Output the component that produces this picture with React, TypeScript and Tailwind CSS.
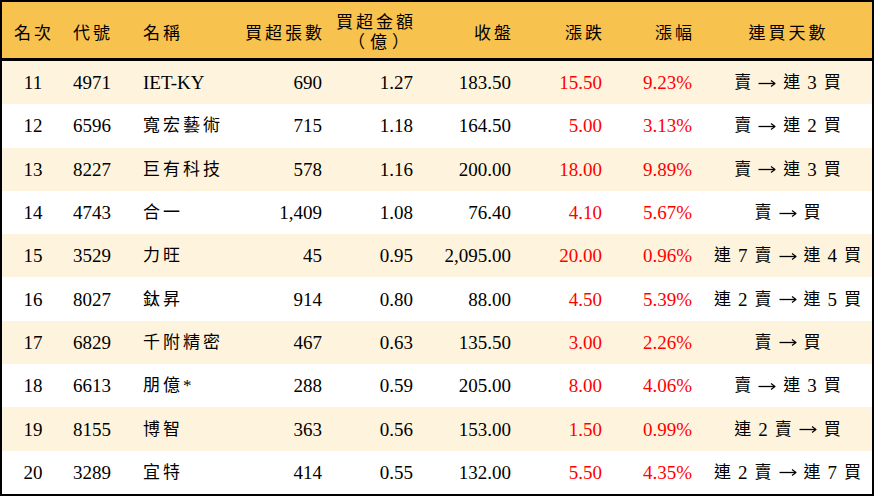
import React from "react";

type Row = {
  rank: string;
  code: string;
  name: string;
  vol: string;
  amt: string;
  close: string;
  chg: string;
  pct: string;
  streak: string[];
};

const rows: Row[] = [
  { rank: "11", code: "4971", name: "IET-KY", vol: "690", amt: "1.27", close: "183.50", chg: "15.50", pct: "9.23%", streak: ["賣", "→", "連", "3", "買"] },
  { rank: "12", code: "6596", name: "寬宏藝術", vol: "715", amt: "1.18", close: "164.50", chg: "5.00", pct: "3.13%", streak: ["賣", "→", "連", "2", "買"] },
  { rank: "13", code: "8227", name: "巨有科技", vol: "578", amt: "1.16", close: "200.00", chg: "18.00", pct: "9.89%", streak: ["賣", "→", "連", "3", "買"] },
  { rank: "14", code: "4743", name: "合一", vol: "1,409", amt: "1.08", close: "76.40", chg: "4.10", pct: "5.67%", streak: ["賣", "→", "買"] },
  { rank: "15", code: "3529", name: "力旺", vol: "45", amt: "0.95", close: "2,095.00", chg: "20.00", pct: "0.96%", streak: ["連", "7", "賣", "→", "連", "4", "買"] },
  { rank: "16", code: "8027", name: "鈦昇", vol: "914", amt: "0.80", close: "88.00", chg: "4.50", pct: "5.39%", streak: ["連", "2", "賣", "→", "連", "5", "買"] },
  { rank: "17", code: "6829", name: "千附精密", vol: "467", amt: "0.63", close: "135.50", chg: "3.00", pct: "2.26%", streak: ["賣", "→", "買"] },
  { rank: "18", code: "6613", name: "朋億*", vol: "288", amt: "0.59", close: "205.00", chg: "8.00", pct: "4.06%", streak: ["賣", "→", "連", "3", "買"] },
  { rank: "19", code: "8155", name: "博智", vol: "363", amt: "0.56", close: "153.00", chg: "1.50", pct: "0.99%", streak: ["連", "2", "賣", "→", "買"] },
  { rank: "20", code: "3289", name: "宜特", vol: "414", amt: "0.55", close: "132.00", chg: "5.50", pct: "4.35%", streak: ["連", "2", "賣", "→", "連", "7", "買"] },
];

const grid =
  "grid grid-cols-[62px_70px_96px_102px_91px_98px_91px_90px_170px] items-center";

const font = {
  fontFamily: '"Liberation Serif", "Noto Sans CJK TC", serif',
};

function Arrow() {
  return (
    <svg width="18" height="10" viewBox="0 0 18 10" className="block">
      <path d="M0.5 5.5 H16.5" stroke="#000" strokeWidth="1.3" fill="none" />
      <path d="M13 2.5 L17 5.5 L13 8.5" stroke="#000" strokeWidth="1.2" fill="none" strokeLinejoin="round" />
    </svg>
  );
}

export default function App() {
  return (
    <div
      className="w-[874px] h-[496px] border-2 border-black bg-white flex flex-col text-black overflow-hidden"
      style={font}
    >
      <div className={`${grid} h-[59px] pt-[7px] bg-[#F8C24F] border-b-[3px] border-black text-[17px] leading-[20px] tracking-[3px] shrink-0`}>
        <div className="text-center pl-[2px]">名次</div>
        <div className="pl-[9px]">代號</div>
        <div className="pl-[9px]">名稱</div>
        <div className="text-right pr-[7px]">買超張數</div>
        <div className="text-right pr-[7px] flex flex-col items-end -mt-[2px]">
          <span>買超金額</span>
          <span className="pr-[2px] tracking-[5px]">（億）</span>
        </div>
        <div className="text-right pr-[7px]">收盤</div>
        <div className="text-right pr-[7px]">漲跌</div>
        <div className="text-right pr-[7px]">漲幅</div>
        <div className="text-center pl-[3px]">連買天數</div>
      </div>
      <div className="flex-1 flex flex-col">
        {rows.map((r, i) => (
          <div
            key={r.rank}
            className={`${grid} flex-1 text-[19px] leading-none ${i % 2 === 0 ? "bg-[#FEF4DE]" : "bg-white"}`}
          >
            <div className="text-center">{r.rank}</div>
            <div className="pl-[9px]">{r.code}</div>
            <div className="pl-[9px] text-[17px] tracking-[3px]">
              {r.name === "IET-KY" ? (
                <span className="tracking-normal text-[19px]">{r.name}</span>
              ) : (
                r.name
              )}
            </div>
            <div className="text-right pr-[10px]">{r.vol}</div>
            <div className="text-right pr-[10px]">{r.amt}</div>
            <div className="text-right pr-[10px]">{r.close}</div>
            <div className="text-right pr-[10px] text-[#FF0000]">{r.chg}</div>
            <div className="text-right pr-[10px] text-[#FF0000]">{r.pct}</div>
            <div className="flex justify-center items-center gap-[7px] pl-[1px]">
              {r.streak.map((t, k) =>
                t === "→" ? (
                  <Arrow key={k} />
                ) : (
                  <span
                    key={k}
                    className={/[0-9]/.test(t) ? "text-[19px]" : "text-[17px]"}
                  >
                    {t}
                  </span>
                )
              )}
            </div>
          </div>
        ))}
      </div>
    </div>
  );
}
